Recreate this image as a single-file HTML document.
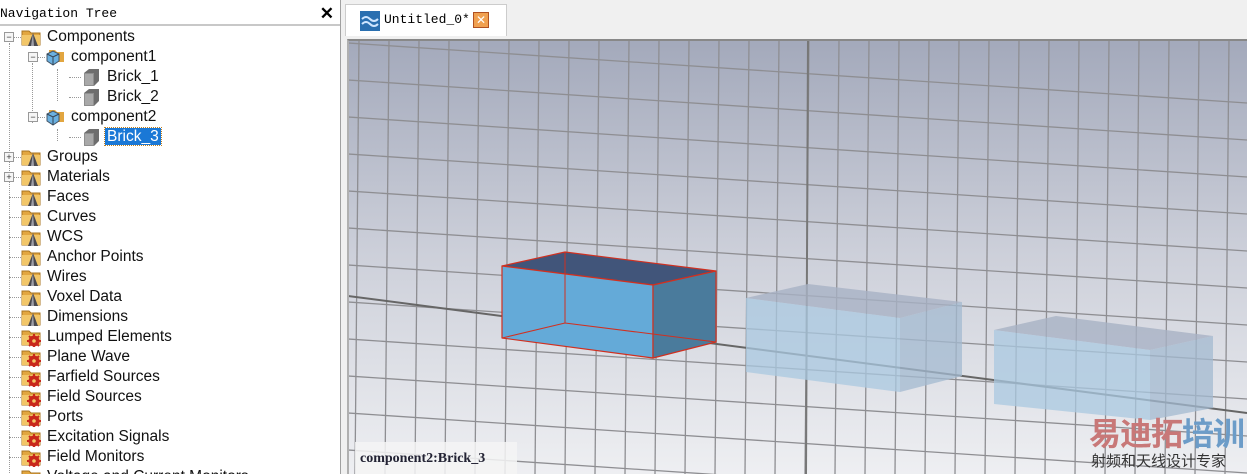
<!DOCTYPE html>
<html><head><meta charset="utf-8"><style>
*{box-sizing:border-box}
html,body{margin:0;width:1247px;height:474px;overflow:hidden}
body{background:#f0f0f0;font-family:"Liberation Sans","DejaVu Sans",sans-serif;position:relative}
#left{position:absolute;left:0;top:0;width:341px;height:474px;background:#fff;border-right:1px solid #a0a0a0;overflow:hidden}
#hdr{position:absolute;left:0;top:0;width:340px;height:26px;background:#fff;border-bottom:2px solid #c8c8c8;font-family:"Liberation Mono",monospace;font-size:13px;line-height:27px}
.x{position:absolute;right:6px;top:0px;font-family:"Liberation Sans",sans-serif;font-size:17px;font-weight:bold}
#rows{position:absolute;left:0;top:0;width:340px;height:474px;overflow:hidden}
.r{position:absolute;height:20px;line-height:20px;font-size:15.5px;color:#111;white-space:nowrap}
.r svg{position:absolute;left:-26px;top:0px}
.sel{background:#1a78d6;color:#fff;outline:1px dotted #c08020;padding:0 2px;margin-left:-2px}
.pm{position:absolute;width:10px;height:10px;border:1px solid #999;background:#f6f6f6;font-size:9px;line-height:8px;text-align:center;color:#333}
.dv{position:absolute;border-left:1px dotted #999}
.dh{position:absolute;border-top:1px dotted #999;height:0}
#tab{position:absolute;left:345px;top:4px;width:162px;height:32px;background:#fff;border:1px solid #ccc;border-bottom:none}
#vp{position:absolute;left:347px;top:39px;width:900px;height:435px;border-top:2px solid #888;border-left:2px solid #b0b0b0;overflow:hidden}
.wm{position:absolute;white-space:nowrap;font-family:'Liberation Sans','Noto Sans CJK SC',sans-serif}
</style></head><body>
<div id="left">
<div id="hdr">Navigation Tree<span class="x">✕</span></div>
<div class="dv" style="left:9px;top:43px;height:434px"></div>
<div class="dv" style="left:32px;top:63px;height:60px"></div>
<div class="dv" style="left:57px;top:69px;height:32px"></div>
<div class="dv" style="left:57px;top:129px;height:12px"></div>
</div>
<div id="rows"></div>
<script>
var folder='<path d="M1 4h7l2 2h9v12H1z" fill="#e2a640" stroke="#a87420"/><path d="M1 8h18v10H1z" fill="#f2c668"/>';
var cone='<path d="M12 6l5 13H7z" fill="#4a4a50"/><path d="M12 6l1 13H10z" fill="#a0a0a8"/>';
var gear='<circle cx="13" cy="14" r="5.5" fill="#c8281c"/><path d="M13 7v14M6 14h14M8 9l10 10M18 9L8 19" stroke="#c8281c" stroke-width="2"/><circle cx="13" cy="14" r="1.8" fill="#f2c668"/>';
var brick='<path d="M3 6l5-4h10v12l-5 5H3z" fill="#6d6d6d"/><path d="M3 6h10v13H3z" fill="#8e8e8e"/><path d="M4 7h8v11H4z" fill="#a8a8a8"/>';
var comp='<path d="M4 3h6l2 2h7v10H4z" fill="#e2a640"/><path d="M2 7l6-3 6 3v7l-6 4-6-4z" fill="#6ab0e0" stroke="#456"/><path d="M2 7l6 3 6-3M8 10v8" stroke="#345" fill="none"/>';
var items=[["Components",folder+cone,47,1],["component1",comp,71,1],["Brick_1",brick,107,0],["Brick_2",brick,107,0],["component2",comp,71,1],["Brick_3",brick,107,0,1],["Groups",folder+cone,47,2],["Materials",folder+cone,47,2],["Faces",folder+cone,47],["Curves",folder+cone,47],["WCS",folder+cone,47],["Anchor Points",folder+cone,47],["Wires",folder+cone,47],["Voxel Data",folder+cone,47],["Dimensions",folder+cone,47],["Lumped Elements",folder+gear,47],["Plane Wave",folder+gear,47],["Farfield Sources",folder+gear,47],["Field Sources",folder+gear,47],["Ports",folder+gear,47],["Excitation Signals",folder+gear,47],["Field Monitors",folder+gear,47],["Voltage and Current Monitors",folder+gear,47]];
var h='';
items.forEach(function(it,i){var y=27+20*i;
 h+='<div class="dh" style="left:'+(it[2]-38)+'px;top:'+(y+10)+'px;width:12px"></div>';
 if(it[3]) h+='<div class="pm" style="left:'+(it[2]-43)+'px;top:'+(y+5)+'px">'+(it[3]==1?'−':'+')+'</div>';
 h+='<div class="r" style="left:'+it[2]+'px;top:'+y+'px"><svg width="20" height="20" viewBox="0 0 20 20">'+it[1]+'</svg><span'+(it[4]?' class="sel"':'')+'>'+it[0]+'</span></div>';});
document.getElementById('rows').innerHTML=h;
</script>
<div id="tab"><svg style="position:absolute;left:14px;top:6px" width="20" height="20"><rect width="20" height="20" fill="#2a6fb0"/><path d="M2 8q4-4 8 0t8 0M2 13q4-4 8 0t8 0" stroke="#cfe6ff" stroke-width="2" fill="none"/></svg><span style="position:absolute;left:38px;top:7px;font-family:'Liberation Mono',monospace;font-size:13px">Untitled_0*</span><div style="position:absolute;left:127px;top:7px;width:16px;height:16px;background:#f0a050;border:1px solid #b05020;color:#fff;font-size:12px;line-height:14px;text-align:center;font-weight:bold">✕</div></div>
<div id="vp"><svg width="900" height="435" viewBox="347 39 900 435" style="position:absolute;left:-2px;top:-2px">
<defs><linearGradient id="g" x1="0" y1="0" x2="0" y2="1"><stop offset="0" stop-color="#a3a9bb"/><stop offset=".5" stop-color="#cdd0da"/><stop offset="1" stop-color="#eeeff2"/></linearGradient></defs>
<rect x="347" y="39" width="900" height="435" fill="url(#g)"/>
<g id="gl" stroke="#8e8e92" stroke-width="1.3" fill="none"></g>
<line x1="348" y1="296" x2="1247" y2="413" stroke="#666" stroke-width="2"/>
<line x1="808" y1="40" x2="806" y2="474" stroke="#777" stroke-width="2"/>
<g>
<path d="M746 298L808 284L962 302L900 318Z" fill="#a8b2c4" opacity=".8"/>
<path d="M746 298L900 318L900 392L746 372Z" fill="#a9c8e0" opacity=".75"/>
<path d="M900 318L962 302L962 376L900 392Z" fill="#a3bad0" opacity=".75"/>
<path d="M994 330L1056 316L1213 336L1150 350Z" fill="#a8b2c4" opacity=".8"/>
<path d="M994 330L1150 350L1150 420L994 404Z" fill="#a9c8e0" opacity=".75"/>
<path d="M1150 350L1213 336L1213 408L1150 420Z" fill="#a3bad0" opacity=".75"/>
</g>
<g stroke="#d03020" stroke-width="1.2" stroke-linejoin="round">
<path d="M502 266L565 252L716 271L653 285Z" fill="#41557a"/>
<path d="M502 266L653 285L653 358L502 338Z" fill="#64aad8"/>
<path d="M653 285L716 271L716 342L653 358Z" fill="#4a7b9c"/>
<path d="M565 252L565 323L502 338M565 323L716 342" fill="none" stroke-width="1"/>
</g>
</svg>
<div style="position:absolute;left:6px;top:401px;width:162px;height:34px;background:rgba(245,245,245,.85)"></div>
<div style="position:absolute;left:11px;top:410px;font-family:'Liberation Serif',serif;font-weight:bold;font-size:14px;color:#223;white-space:nowrap">component2:Brick_3</div>
<div class="wm" style="left:740px;top:374px;font-weight:bold;font-size:32px;letter-spacing:-1px;line-height:38px"><span style="color:#c87878">易迪拓</span><span style="color:#6c9cc8">培训</span></div>
<div class="wm" style="left:742px;top:412px;font-size:15px;color:#333;line-height:18px">射频和天线设计专家</div>
</div>
<script>
var g=document.getElementById('gl'),s='';
for(var x=359;x<1260;x+=30){s+='<line x1="'+x+'" y1="40" x2="'+(x-4)+'" y2="474"/>';}
for(var y=43;y<560;y+=37){s+='<line x1="348" y1="'+y+'" x2="1247" y2="'+(y+60)+'"/>';}
g.innerHTML=s;
</script>
</body></html>
